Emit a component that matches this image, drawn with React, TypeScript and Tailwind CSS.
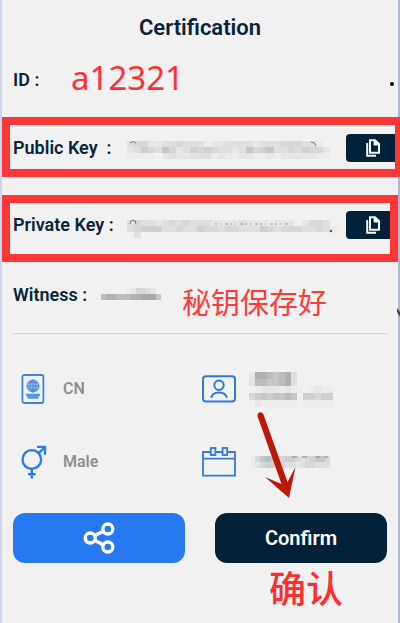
import type { ReactNode } from "react";

// Each digit is one cell of a masked value: 0 is clear, 9 is darkest.
const SHADES = [
	"transparent",
	"#ebecec",
	"#e5e6e6",
	"#dedfdf",
	"#d6d7d7",
	"#cecfcf",
	"#c6c6c6",
	"#bcbcbc",
	"#b0b0b0",
	"#a8a8a8",
];

const PUBLIC_KEY = [
	"344223343331223333233344433100",
	"235436423545433236456334354420",
	"111102322333121122112122222110",
];
const PRIVATE_KEY = [
	"343323434333222232221222024430",
	"345553343354434433354344433431",
	"030000000000000000000000000000",
];
const WITNESS = ["000001244320", "788777889996"];
const FULL_NAME = [
	"288767830000000",
	"277667830000000",
	"012221211012110",
	"456566760554550",
	"021111110111110",
];
const BIRTHDAY = ["1467654554345664", "1245544332344333"];

function Masked({
	rows,
	cellWidth = 7,
	cellHeight = 6,
	className = "",
	children,
}: {
	rows: string[];
	cellWidth?: number;
	cellHeight?: number;
	className?: string;
	children?: ReactNode;
}) {
	return (
		<svg
			role="img"
			aria-label="Hidden value"
			width={rows[0].length * cellWidth}
			height={rows.length * cellHeight}
			className={`block shrink-0 overflow-visible ${className}`}
		>
			{rows.map((row, y) =>
				row
					.split("")
					.map((level, x) => (
						<rect
							key={`${x}-${y}`}
							x={x * cellWidth}
							y={y * cellHeight}
							width={cellWidth}
							height={cellHeight}
							fill={SHADES[Number(level)]}
						/>
					)),
			)}
			{children}
		</svg>
	);
}

function CopyButton({ label }: { label: string }) {
	return (
		<button
			type="button"
			aria-label={label}
			className="flex h-7 w-full items-center rounded-l bg-[#04213a] pl-5"
		>
			<svg width="14" height="18" viewBox="0 0 14 18" fill="none" stroke="#f4f6f8" strokeWidth="2">
				<path d="M4 1.2h5L13 5v8.8H4z" />
				<path d="M8.6 1.2v4.2H13" fill="#f4f6f8" />
				<path d="M1.2 4v12.8H10" />
			</svg>
		</button>
	);
}

function PassportIcon() {
	return (
		<svg width="24" height="30" viewBox="0 0 24 30" fill="none" stroke="#3b82de" strokeWidth="1.8">
			<rect x="1.4" y="1" width="21" height="28" rx="2" />
			<circle cx="12" cy="12" r="6" fill="#9cc0ec" strokeWidth="1" />
			<path
				d="M12 6v12M6 12h12M7.2 8.7h9.6M7.2 15.3h9.6M12 6c-4 3.5-4 8.5 0 12M12 6c4 3.5 4 8.5 0 12"
				strokeWidth=".9"
			/>
			<path d="M5 21h14M6.5 23.5h11" stroke="#5b95df" strokeWidth="2.4" />
		</svg>
	);
}

function GenderIcon() {
	return (
		<svg width="26" height="34" viewBox="0 0 26 34" fill="none" stroke="#2679f2" strokeWidth="2.3">
			<circle cx="10.8" cy="14.5" r="9.3" />
			<path d="M17.2 8.6 24 2M16 1.8h8v8M10.8 24v9.5M7 29.2h7.6" />
		</svg>
	);
}

function PersonCardIcon() {
	return (
		<svg width="34" height="28" viewBox="0 0 34 28" fill="none" stroke="#2f79df" strokeWidth="2">
			<rect x="1" y="1.2" width="32" height="25.2" rx="3" />
			<circle cx="17" cy="10.2" r="4.7" />
			<path d="M9.2 22.8c1.4-7.2 14.2-7.2 15.6 0" />
		</svg>
	);
}

function CalendarIcon() {
	return (
		<svg width="34" height="30" viewBox="0 0 34 30" fill="none" stroke="#3479db" strokeWidth="1.8">
			<path d="M8.5 5H1v23.6h32V5h-7.5M13.5 5h7M1 11.6h32" />
			<rect x="8.8" y="1" width="4.6" height="7" />
			<rect x="20.6" y="1" width="4.6" height="7" />
		</svg>
	);
}

function ShareIcon() {
	return (
		<svg width="32" height="34" viewBox="0 0 32 34" fill="none" stroke="#fff" strokeWidth="3.4">
			<circle cx="7.2" cy="17" r="5" />
			<circle cx="24.8" cy="8" r="5" />
			<circle cx="24.8" cy="26" r="5" />
			<path d="m11.5 14.8 8.8-4.6M11.5 19.2l8.8 4.6" />
		</svg>
	);
}

export default function App() {
	return (
		<main className="relative min-h-screen border-x-2 border-l-[#ccd5ea] border-r-[#a9b9d0] bg-[#f1f1f1] font-[Roboto,'Noto_Sans_CJK_SC',sans-serif] text-lg/6 font-semibold text-[#08243b]">
			<h1 className="pt-3 text-center text-[22px]/8">Certification</h1>

			<div className="mt-3 flex h-12 items-center pr-1 pl-[11px]">
				<span className="w-[58px]">ID :</span>
				<span className="pb-1 font-['Noto_Sans',sans-serif] text-[33px]/10 font-normal text-[#ff3030]">
					a12321
				</span>
				<span className="mt-2 ml-auto size-1 rounded-full bg-black" />
			</div>

			<section className="mt-[13px] -mr-0.5 grid h-[60px] grid-cols-[114px_1fr_49px] items-center border-8 border-r-[5px] border-[#fd3737] pt-0.5 pl-[3px]">
				<span className="whitespace-pre">Public Key  :</span>
				<Masked rows={PUBLIC_KEY} className="mt-1 -mr-2">
					<path d="M3 2q3-3 6 0M184 1q4 0 5 4" fill="none" stroke="#777" />
				</Masked>
				<CopyButton label="Copy public key" />
			</section>

			<section className="mt-[18px] grid h-[67px] grid-cols-[114px_1fr_44px] items-center border-8 border-[#fd3737] pb-2 pl-[3px]">
				<span>Private Key :</span>
				<Masked rows={PRIVATE_KEY} className="mt-2">
					<path d="M3 4q0-4 3-4t3 4" fill="none" stroke="#777" />
					<path d="M88 4h76" stroke="#999" strokeDasharray="2 3 1 4 3 2" />
					<circle cx="204" cy="11" r="1.2" fill="#555" />
				</Masked>
				<CopyButton label="Copy private key" />
			</section>

			<div className="mx-[11px] flex h-[72px] items-center border-b border-[#d3d3d5]">
				<span className="mb-1.5 w-[88px]">Witness :</span>
				<Masked rows={WITNESS} cellWidth={5} className="mb-2" />
				<strong className="mt-3 ml-[21px] text-[29px]/10 font-normal whitespace-nowrap text-[#ff3a3a]">
					秘钥保存好
				</strong>
			</div>

			<div className="mx-[11px] mt-[18px] grid grid-cols-2 text-[16px]/5 text-[#8e8f91]">
				<div className="flex h-[74px] items-center">
					<span className="w-[50px] pl-2">
						<PassportIcon />
					</span>
					CN
				</div>
				<div className="flex h-[74px] items-center">
					<span className="w-[50px] pl-0.5">
						<PersonCardIcon />
					</span>
					<Masked rows={FULL_NAME} cellWidth={6} cellHeight={7} className="-ml-px" />
				</div>
				<div className="flex h-[72px] items-center">
					<span className="w-[50px] pl-2">
						<GenderIcon />
					</span>
					Male
				</div>
				<div className="flex h-[72px] items-center">
					<span className="w-[50px] pl-0.5">
						<CalendarIcon />
					</span>
					<Masked rows={BIRTHDAY} cellWidth={5}>
						<path d="M42 1h5M52 1h5M66 1h4M74 1h4" stroke="#888" />
					</Masked>
				</div>
			</div>

			<div className="mx-[11px] mt-[15px] grid grid-cols-2 gap-x-[30px]">
				<button
					type="button"
					aria-label="Share"
					className="flex h-[50px] items-center justify-center rounded-xl bg-[#2679f0]"
				>
					<ShareIcon />
				</button>
				<button type="button" className="h-[50px] rounded-xl bg-[#04213a] text-[20px]/6 text-white">
					Confirm
				</button>
				<strong className="col-start-2 mt-1 pl-[54px] text-[37px]/12 font-medium text-[#ff2d2d]">
					确认
				</strong>
			</div>

			{/* pointer from the details down to the confirm button */}
			<svg
				aria-hidden="true"
				width="44"
				height="88"
				viewBox="0 0 44 88"
				className="absolute top-[411px] left-[252px]"
			>
				<path
					d="M3.6 5.5C2.5 1.5 7.500-.5 9.300 3L33.500 71l8-15L35 87 11 66l16.500 7z"
					fill="#bd170c"
				/>
			</svg>

			{/* dark fleck on the window edge */}
			<svg
				aria-hidden="true"
				width="3"
				height="9"
				viewBox="0 0 3 9"
				className="absolute top-[308px] -right-0.5"
			>
				<path d="M0 0l3 4v5L0 4z" fill="#444" />
			</svg>
		</main>
	);
}
